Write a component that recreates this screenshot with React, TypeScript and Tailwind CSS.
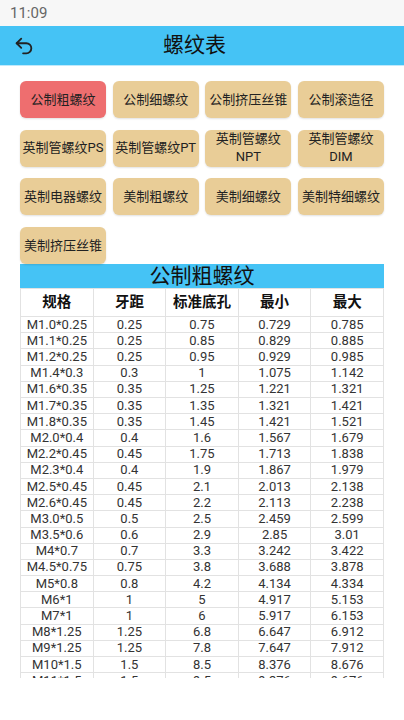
import { Undo2 } from "lucide-react";

const BUTTONS: string[][] = [
  ["公制粗螺纹"],
  ["公制细螺纹"],
  ["公制挤压丝锥"],
  ["公制滚造径"],
  ["英制管螺纹PS"],
  ["英制管螺纹PT"],
  ["英制管螺纹", "NPT"],
  ["英制管螺纹", "DIM"],
  ["英制电器螺纹"],
  ["美制粗螺纹"],
  ["美制细螺纹"],
  ["美制特细螺纹"],
  ["美制挤压丝锥"],
];

const ROWS: string[][] = [
  ["M1.0*0.25", "0.25", "0.75", "0.729", "0.785"],
  ["M1.1*0.25", "0.25", "0.85", "0.829", "0.885"],
  ["M1.2*0.25", "0.25", "0.95", "0.929", "0.985"],
  ["M1.4*0.3", "0.3", "1", "1.075", "1.142"],
  ["M1.6*0.35", "0.35", "1.25", "1.221", "1.321"],
  ["M1.7*0.35", "0.35", "1.35", "1.321", "1.421"],
  ["M1.8*0.35", "0.35", "1.45", "1.421", "1.521"],
  ["M2.0*0.4", "0.4", "1.6", "1.567", "1.679"],
  ["M2.2*0.45", "0.45", "1.75", "1.713", "1.838"],
  ["M2.3*0.4", "0.4", "1.9", "1.867", "1.979"],
  ["M2.5*0.45", "0.45", "2.1", "2.013", "2.138"],
  ["M2.6*0.45", "0.45", "2.2", "2.113", "2.238"],
  ["M3.0*0.5", "0.5", "2.5", "2.459", "2.599"],
  ["M3.5*0.6", "0.6", "2.9", "2.85", "3.01"],
  ["M4*0.7", "0.7", "3.3", "3.242", "3.422"],
  ["M4.5*0.75", "0.75", "3.8", "3.688", "3.878"],
  ["M5*0.8", "0.8", "4.2", "4.134", "4.334"],
  ["M6*1", "1", "5", "4.917", "5.153"],
  ["M7*1", "1", "6", "5.917", "6.153"],
  ["M8*1.25", "1.25", "6.8", "6.647", "6.912"],
  ["M9*1.25", "1.25", "7.8", "7.647", "7.912"],
  ["M10*1.5", "1.5", "8.5", "8.376", "8.676"],
  ["M11*1.5", "1.5", "9.5", "9.376", "9.676"],
];

const HEADERS = ["规格", "牙距", "标准底孔", "最小", "最大"];

export default function App() {
  return (
    <div
      className="w-[404px] h-[720px] bg-white overflow-hidden"
      style={{ fontFamily: "Roboto, 'Noto Sans CJK SC', sans-serif" }}
    >
      {/* status bar */}
      <div className="h-[26px] bg-[#f7f7f7] flex items-center pl-[10px] text-[15px] text-[#666]">
        11:09
      </div>

      {/* title bar */}
      <div className="h-[40px] bg-[#45c3f5] flex items-center border-b border-[#bfe9fb]">
        <div className="w-[50px] pl-[13px] flex items-center">
          <Undo2 size={22} strokeWidth={2} className="text-[#222]" />
        </div>
        <div className="pl-[113px] text-[21px] text-[#111] leading-none">螺纹表</div>
      </div>

      {/* scroll area, cut at the bottom as in the app */}
      <div className="h-[612px] overflow-hidden">
        <div className="grid grid-cols-4 gap-x-[6.7px] gap-y-[11.7px] px-[20px] pt-[15px]">
          {BUTTONS.map((lines, i) => (
            <div
              key={i}
              className={
                "h-[37px] rounded-[6px] flex flex-col items-center justify-center text-[13px] leading-[18px] text-[#222] shadow-[0_1px_2px_rgba(0,0,0,0.12)] " +
                (i === 0 ? "bg-[#ee6e6f]" : "bg-[#e9cd97]")
              }
            >
              {lines.map((l) => (
                <span key={l} className="whitespace-nowrap">
                  {l}
                </span>
              ))}
            </div>
          ))}
        </div>

        <div className="mx-[20px]">
          <div className="h-[24px] bg-[#45c3f5] flex items-center justify-center text-[21px] text-[#111] leading-none">
            公制粗螺纹
          </div>
          <table className="w-full table-fixed border-collapse">
            <thead>
              <tr className="h-[28px]">
                {HEADERS.map((h) => (
                  <th
                    key={h}
                    className="border-[1.5px] border-[#e2e2e2] text-[14.5px] font-bold text-[#111] text-center p-0"
                  >
                    {h}
                  </th>
                ))}
              </tr>
            </thead>
            <tbody>
              {ROWS.map((r) => (
                <tr key={r[0]} className="h-[16.2px]">
                  {r.map((c, j) => (
                    <td
                      key={j}
                      className="border-[1.5px] border-[#e2e2e2] text-[13px] leading-[14px] text-[#333] text-center p-0"
                    >
                      {c}
                    </td>
                  ))}
                </tr>
              ))}
            </tbody>
          </table>
        </div>
      </div>
    </div>
  );
}
